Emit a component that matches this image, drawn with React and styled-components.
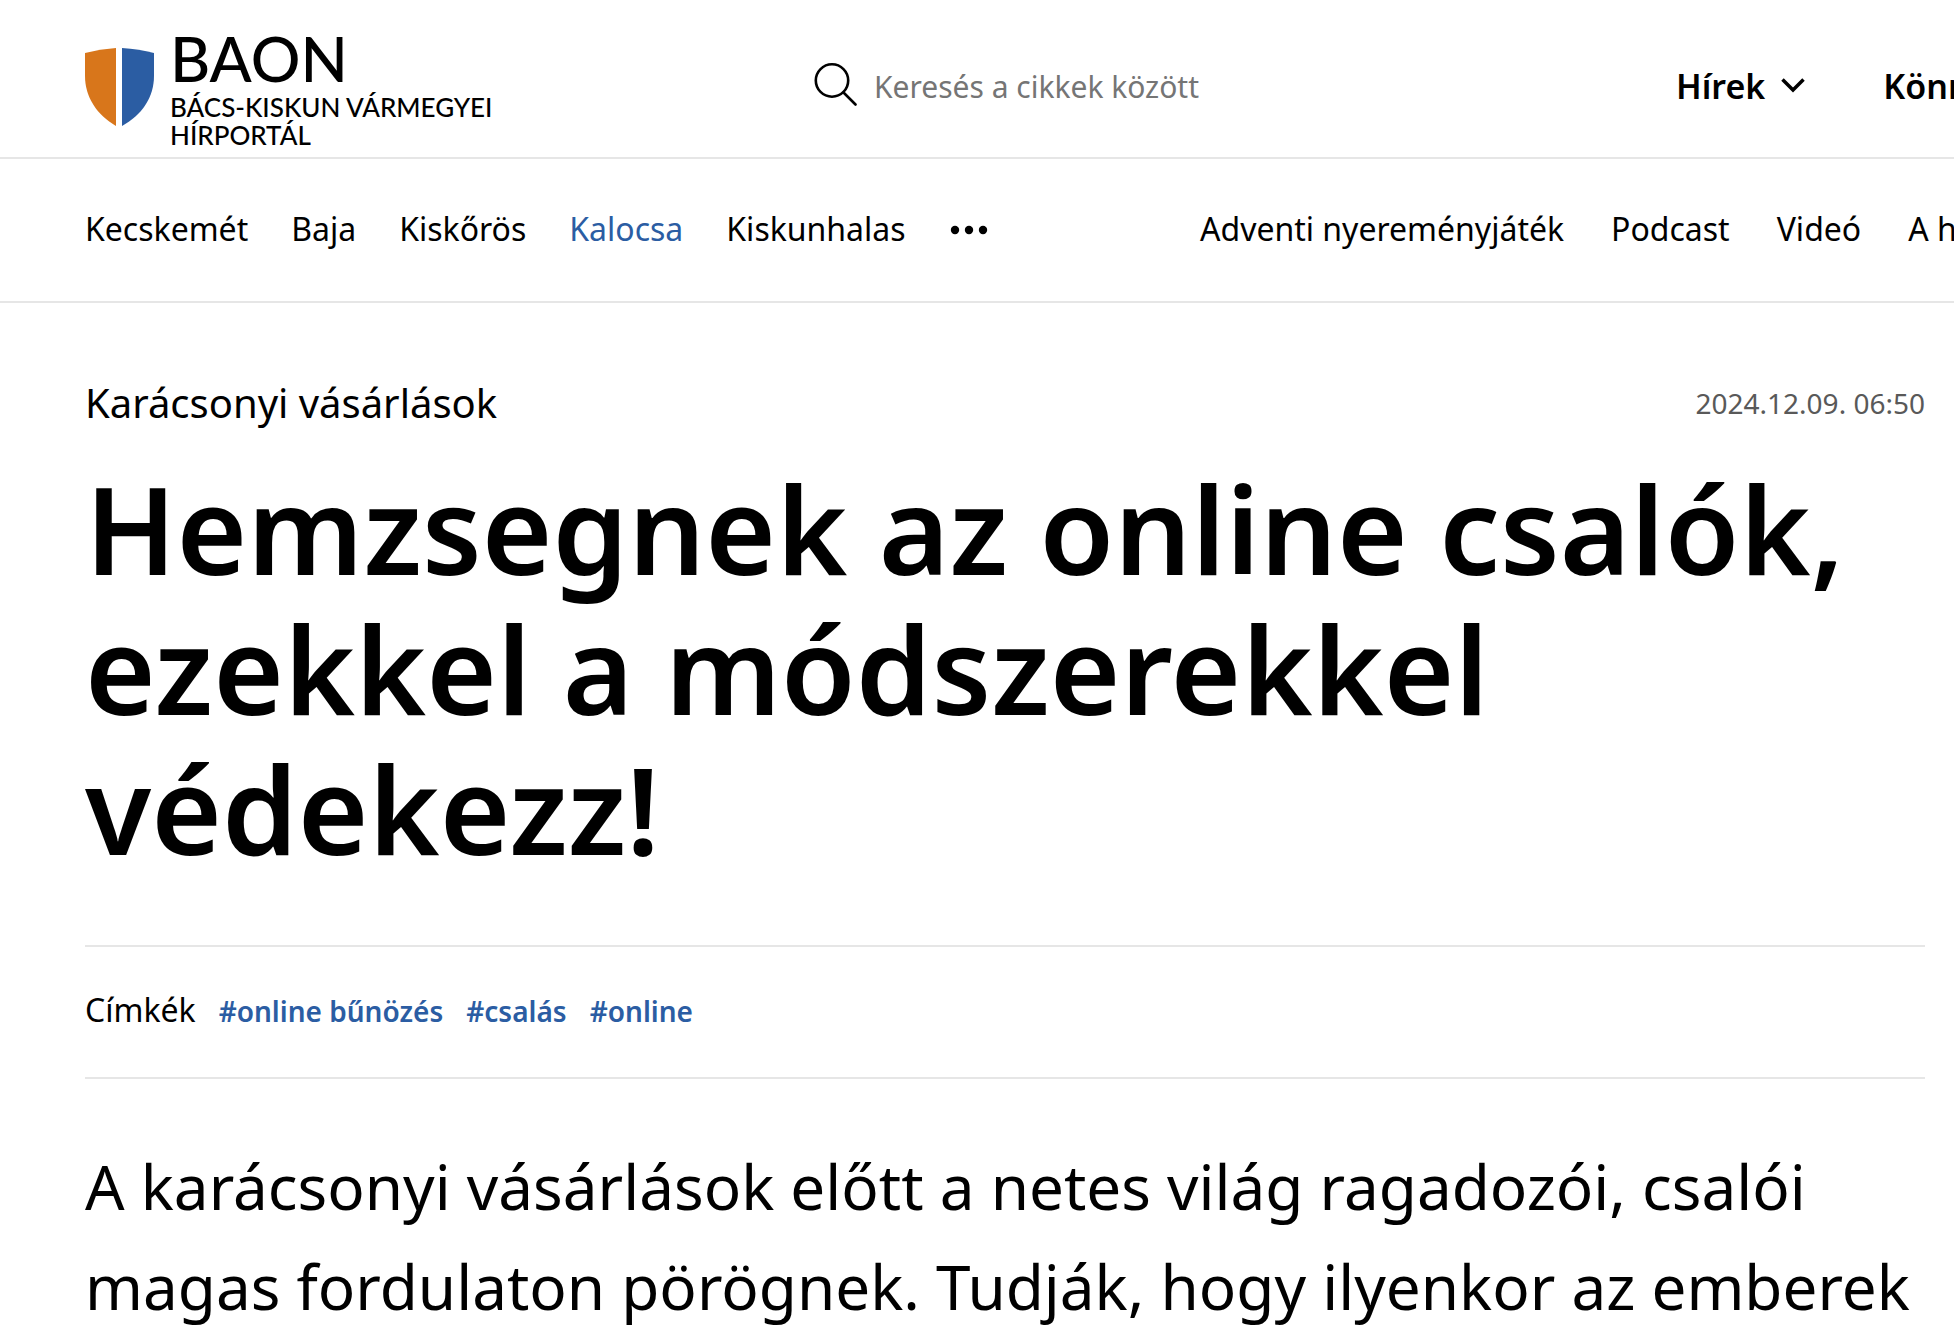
import React from 'react';
import styled, { createGlobalStyle } from 'styled-components';

const GlobalStyle = createGlobalStyle`
  * {
    box-sizing: border-box;
  }
  body {
    margin: 0;
    background: #fff;
    color: #000;
    font-family: "Noto Sans", "Open Sans", sans-serif;
    overflow-x: hidden;
  }
  a {
    color: inherit;
    text-decoration: none;
  }
`;

const BLUE = '#2b5da3';
const LINE = '#e6e6e6';

const Page = styled.div`
  overflow: hidden;
`;

const Header = styled.header`
  display: grid;
  grid-template-columns: minmax(0, 729fr) minmax(0, 862fr) minmax(0, 278fr);
  padding: 24px 0 8px 85px;
  border-bottom: 2px solid ${LINE};
`;

const Logo = styled.a`
  display: flex;
  align-items: flex-start;
  gap: 16px;
  font-family: Lato, "Noto Sans", sans-serif;
  font-weight: 500;
`;

const Shield = styled.svg`
  flex: none;
  width: 69px;
  height: 79px;
  margin-top: 24px;
`;

const LogoText = styled.span`
  display: flex;
  flex-direction: column;
  width: 340px;
`;

const Brand = styled.span`
  font-size: 62px;
  line-height: 69px;
`;

const Tagline = styled.span`
  font-size: 26px;
  line-height: 28px;
`;

const Search = styled.form`
  display: flex;
  align-items: center;
  gap: 16px;
  height: 124px;
`;

const SearchButton = styled.button`
  display: flex;
  padding: 0 0 4px;
  border: 0;
  background: none;
  cursor: pointer;
`;

const SearchInput = styled.input`
  flex: 1;
  min-width: 0;
  padding: 2px 0 0;
  border: 0;
  outline: none;
  background: none;
  color: #000;
  font: 400 30px/40px "Noto Sans", sans-serif;
  &::placeholder {
    color: #757575;
    opacity: 1;
  }
`;

const MainMenu = styled.nav`
  display: flex;
  align-items: center;
  gap: 78px;
  height: 124px;
  white-space: nowrap;
`;

const MenuButton = styled.button`
  display: flex;
  flex: none;
  align-items: center;
  gap: 16px;
  padding: 0;
  border: 0;
  background: none;
  color: #000;
  font: 600 34px/46px "Noto Sans", sans-serif;
  cursor: pointer;
`;

const SubHeader = styled.div`
  display: grid;
  grid-template-columns: minmax(0, 1115fr) minmax(0, 754fr);
  padding: 48px 0 50px 85px;
  border-bottom: 2px solid ${LINE};
`;

const LinkRow = styled.nav`
  display: flex;
  align-items: center;
  gap: ${(p) => p.$gap}px;
  white-space: nowrap;
  font-size: 32px;
  line-height: 44px;
`;

const NavLink = styled.a`
  color: ${(p) => (p.$active ? BLUE : '#000')};
`;

const MoreButton = styled.button`
  display: flex;
  padding: 2px 0 0;
  border: 0;
  background: none;
  cursor: pointer;
`;

const Article = styled.main`
  padding: 73px 29px 0 85px;
`;

const Meta = styled.div`
  display: flex;
  align-items: center;
  justify-content: space-between;
`;

const Kicker = styled.span`
  font-size: 40px;
  line-height: 54px;
`;

const PublishDate = styled.time`
  color: #595959;
  font-size: 28px;
  line-height: 40px;
`;

const Title = styled.h1`
  margin: 28px 0 67px;
  font-size: 121px;
  font-weight: 600;
  line-height: 140px;
`;

const Tags = styled.div`
  display: flex;
  align-items: baseline;
  gap: 23px;
  padding: 41px 0 45px;
  border: solid ${LINE};
  border-width: 2px 0;
`;

const TagsLabel = styled.span`
  font-size: 32px;
  line-height: 44px;
`;

const Tag = styled.a`
  color: ${BLUE};
  font-size: 28px;
  font-weight: 600;
  line-height: 40px;
`;

const Lead = styled.p`
  margin: 57px 0 0;
  font-size: 62px;
  line-height: 100px;
`;

const cities = ['Kecskemét', 'Baja', 'Kiskőrös', 'Kalocsa', 'Kiskunhalas'];
const topics = ['Adventi nyereményjáték', 'Podcast', 'Videó', 'A hét'];
const tags = ['#online bűnözés', '#csalás', '#online'];

const Chevron = () => (
  <svg width="24" height="16" viewBox="0 0 24 16" aria-hidden="true">
    <path d="M1.5 1.5 L12 12 L22.5 1.5" fill="none" stroke="#000" strokeWidth="3.5" />
  </svg>
);

export default function App() {
  return (
    <Page>
      <GlobalStyle />
      <Header>
        <Logo href="#">
          <Shield viewBox="0 0 69 79" aria-hidden="true">
            <path d="M0 5 Q15 1 31 0 V78 C12 67 0 49 0 28 Z" fill="#d8761b" />
            <path d="M37 0 Q54 1 69 5 V28 C69 49 57 67 37 78 Z" fill={BLUE} />
          </Shield>
          <LogoText>
            <Brand>BAON</Brand>
            <Tagline>BÁCS-KISKUN VÁRMEGYEI HÍRPORTÁL</Tagline>
          </LogoText>
        </Logo>
        <Search role="search" onSubmit={(e) => e.preventDefault()}>
          <SearchButton type="submit" aria-label="Keresés">
            <svg width="44" height="44" viewBox="0 0 44 44" aria-hidden="true">
              <g fill="none" stroke="#000" strokeWidth="2.6" strokeLinecap="round">
                <circle cx="18" cy="18.5" r="16.2" />
                <path d="M29.5 30.5 L41.5 42.5" />
              </g>
            </svg>
          </SearchButton>
          <SearchInput
            type="search"
            aria-label="Keresés a cikkek között"
            placeholder="Keresés a cikkek között"
          />
        </Search>
        <MainMenu>
          <MenuButton type="button">
            Hírek
            <Chevron />
          </MenuButton>
          <MenuButton type="button">
            Könnyű
            <Chevron />
          </MenuButton>
        </MainMenu>
      </Header>
      <SubHeader>
        <LinkRow $gap={43}>
          {cities.map((name) => (
            <NavLink key={name} href="#" $active={name === 'Kalocsa'}>
              {name}
            </NavLink>
          ))}
          <MoreButton type="button" aria-label="Továbbiak">
            <svg width="40" height="12" viewBox="0 0 40 12" aria-hidden="true">
              <circle cx="6" cy="6" r="4.2" />
              <circle cx="20" cy="6" r="4.2" />
              <circle cx="34" cy="6" r="4.2" />
            </svg>
          </MoreButton>
        </LinkRow>
        <LinkRow $gap={47}>
          {topics.map((name) => (
            <NavLink key={name} href="#">
              {name}
            </NavLink>
          ))}
        </LinkRow>
      </SubHeader>
      <Article>
        <Meta>
          <Kicker>Karácsonyi vásárlások</Kicker>
          <PublishDate dateTime="2024-12-09T06:50">2024.12.09. 06:50</PublishDate>
        </Meta>
        <Title>Hemzsegnek az online csalók, ezekkel a módszerekkel védekezz!</Title>
        <Tags>
          <TagsLabel>Címkék</TagsLabel>
          {tags.map((tag) => (
            <Tag key={tag} href="#">
              {tag}
            </Tag>
          ))}
        </Tags>
        <Lead>
          A karácsonyi vásárlások előtt a netes világ ragadozói, csalói magas
          fordulaton pörögnek. Tudják, hogy ilyenkor az emberek
        </Lead>
      </Article>
    </Page>
  );
}
